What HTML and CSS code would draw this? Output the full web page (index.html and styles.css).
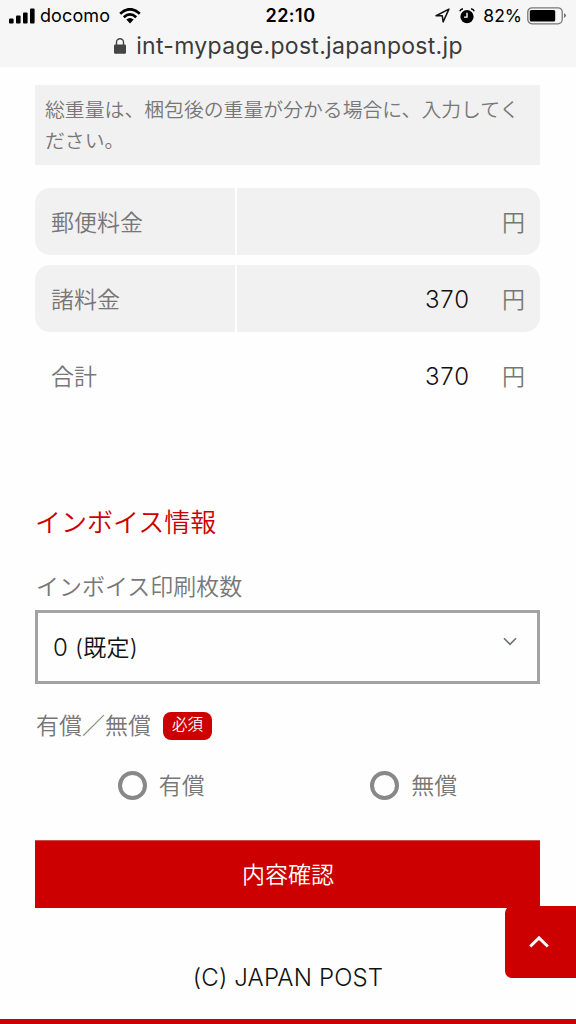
FILE: index.html
```html
<!DOCTYPE html>
<html lang="ja">
<head>
<meta charset="utf-8">
<title>内容確認</title>
<link rel="stylesheet" href="styles.css">
</head>
<body>
<header class="browser">
  <div class="status">
    <div class="status-left">
      <svg class="signal" width="26" height="16" viewBox="0 0 26 16"><rect x="0" y="10.5" width="4.6" height="5" rx="1"/><rect x="7" y="7.5" width="4.6" height="8" rx="1"/><rect x="14" y="4.5" width="4.6" height="11" rx="1"/><rect x="21" y="0.5" width="4.6" height="15" rx="1"/></svg>
      <span class="carrier">docomo</span>
      <svg class="wifi" width="22" height="16" viewBox="0 0 22 16"><path d="M1.2 5.7Q11-3.2 20.8 5.7M4.8 9.2Q11 3.7 17.2 9.2" fill="none" stroke="#000" stroke-width="2.7"/><path d="M7.3 11.6Q11 8.3 14.7 11.6L11 15.4Z"/></svg>
    </div>
    <time class="clock">22:10</time>
    <div class="status-right">
      <svg class="location" width="15" height="15" viewBox="0 0 14 14"><path d="M1 7.2L13 1L7.6 13L6.8 7.3Z" fill="none" stroke="#111" stroke-width="1.4" stroke-linejoin="round"/></svg>
      <svg class="alarm" width="16" height="16" viewBox="0 0 15 15"><circle cx="7.5" cy="8.1" r="6.2"/><path d="M.7 3Q1.4 1 3.7.7M11.3.7Q13.6 1 14.3 3" fill="none" stroke="#000" stroke-width="1.3"/><path d="M7.5 4.5V8.6H4.7" fill="none" stroke="#fff" stroke-width="1.3"/></svg>
      <span class="percent">82%</span>
      <svg class="battery" width="40" height="18" viewBox="0 0 40 18"><rect x=".8" y=".8" width="34.4" height="16" rx="4.2" fill="none" stroke="#777" stroke-width="1.3"/><rect x="2.8" y="3" width="25.4" height="11.6" rx="1.5"/><path d="M37 6Q41 8.5 37 11Z" fill="#777"/></svg>
    </div>
  </div>
  <div class="address">
    <svg class="lock" width="14" height="17" viewBox="0 0 14 17"><rect x="1" y="6.5" width="12" height="9.2" rx="1.2" fill="#444"/><path d="M3.5 7V4.2a3.5 3.5 0 0 1 7 0V7" fill="none" stroke="#444" stroke-width="1.4"/></svg>
    <span class="url">int-mypage.post.japanpost.jp</span>
  </div>
</header>
<main class="content">
  <p class="note">総重量は、梱包後の重量が分かる場合に、入力してください。</p>
  <section class="fees">
    <div class="fee"><span class="fee-name">郵便料金</span><span class="fee-value"></span><span class="yen">円</span></div>
    <div class="fee"><span class="fee-name">諸料金</span><span class="fee-value">370</span><span class="yen">円</span></div>
    <div class="fee total"><span class="fee-name">合計</span><span class="fee-value">370</span><span class="yen">円</span></div>
  </section>
  <h2 class="heading">インボイス情報</h2>
  <div class="label">インボイス印刷枚数</div>
  <div class="select"><span class="choice"><span class="zero">0</span> (既定)</span>
    <svg width="14" height="9" viewBox="0 0 14 9"><path d="M1 1.3L7 7.3L13 1.3" fill="none" stroke="#667079" stroke-width="1.6"/></svg>
  </div>
  <div class="label payment">有償／無償<span class="required">必須</span></div>
  <div class="options">
    <div class="option"><i class="radio"></i><span>有償</span></div>
    <div class="option"><i class="radio"></i><span>無償</span></div>
  </div>
  <div class="confirm">内容確認</div>
</main>
<footer class="footer"><span class="copyright">(C) JAPAN POST</span></footer>
<div class="to-top"><svg width="20" height="14" viewBox="0 0 20 14"><path d="M1.2 11.5L10 2.9L18.8 11.5" fill="none" stroke="#fff" stroke-width="3"/></svg></div>
</body>
</html>
```
FILE: styles.css
```css
* { box-sizing: border-box; }
body {
  margin: 0;
  height: 1024px;
  display: flex;
  flex-direction: column;
  position: relative;
  overflow: hidden;
  background: #fefefe;
  color: #777;
  font-family: Inter, "Noto Sans CJK JP", sans-serif;
  font-size: 23px;
  font-weight: 350;
}
svg { display: block; flex: none; }
.browser { height: 67px; background: #f6f6f6; color: #000; }
.status {
  height: 31px;
  display: grid;
  grid-template-columns: 1fr auto 1fr;
  align-items: center;
  padding: 0 9px;
  font-size: 18px;
  font-weight: 400;
  line-height: 31px;
}
.status-left, .status-right { display: flex; align-items: center; }
.status-right { justify-content: flex-end; }
.carrier { margin: 0 9px 0 5px; letter-spacing: .1px; }
.clock { font-weight: 600; letter-spacing: .5px; margin-left: 5px; }
.location { margin-right: 9px; }
.alarm { margin-right: 8px; }
.percent { margin-right: 5px; font-size: 17.5px; }
.address { display: flex; align-items: center; justify-content: center; height: 30px; font-weight: 400; color: #3b3b3b; font-size: 23px; }
.lock { margin-right: 9px; }
.url { letter-spacing: .3px; }
.content { padding: 18px 36px 0 35px; }
.note {
  margin: 0;
  height: 80px;
  padding: 10px 5px 0 10px;
  background: #f1f1f1;
  font-size: 19.85px;
  line-height: 31px;
  word-break: break-all;
}
.fees { display: flex; flex-direction: column; gap: 10px; margin-top: 23px; }
.fee {
  display: grid;
  grid-template-columns: 202px 1fr 70px;
  height: 67px;
  border-radius: 15px;
  background: #f1f1f1;
  line-height: 70px;
}
.fee-name { height: 67px; padding-left: 16px; border-right: 2px solid #fefefe; }
.fee-value { text-align: right; color: #111; font-size: 24px; font-weight: 300; line-height: 69px; letter-spacing: .9px; }
.yen { text-align: right; padding-right: 15px; }
.total { background: transparent; }
.heading { margin: 95px 0 0; height: 38px; line-height: 38px; font-size: 26px; font-weight: 350; color: #c00; }
.label { margin-top: 27px; height: 36px; line-height: 36px; padding-left: 1px; }
.select {
  margin-top: 5px;
  height: 74px;
  border: 3px solid #a3a3a3;
  padding: 0 20px 0 15px;
  display: flex;
  align-items: center;
  justify-content: space-between;
  color: #111;
}
.choice { padding-bottom: 2px; letter-spacing: .3px; }
.zero { font-size: 24px; font-weight: 300; }
.select svg { margin-top: -11px; }
.payment { display: flex; align-items: center; margin-top: 24px; }
.required {
  width: 49px;
  height: 28px;
  margin-left: 12px;
  border-radius: 8px;
  background: #c00;
  color: #fff;
  font-size: 15.5px;
  line-height: 26px;
  text-align: center;
}
.options { display: grid; grid-template-columns: 1fr 1fr; margin-top: 23px; height: 36px; }
.option { display: flex; align-items: center; justify-content: center; }
.option span { padding-bottom: 3px; }
.radio { width: 29px; height: 29px; border: 4px solid #888; border-radius: 50%; margin-right: 12px; }
.confirm { margin-top: 37px; height: 68px; background: #c00; color: #fff; text-align: center; line-height: 69px; border-top: 1px solid #cf4b4b; padding-left: 1px; }
.footer { flex: 1; border-bottom: 5px solid #c00; color: #111; text-align: center; padding-top: 52px; line-height: 36px; font-size: 24px; font-weight: 300; }
.copyright { letter-spacing: .15px; }
.to-top {
  position: absolute;
  right: 0;
  top: 906px;
  width: 71px;
  height: 72px;
  border-radius: 7px 0 0 7px;
  background: #c00;
  display: flex;
  align-items: center;
  justify-content: center;
  padding-right: 3px;
}
```
